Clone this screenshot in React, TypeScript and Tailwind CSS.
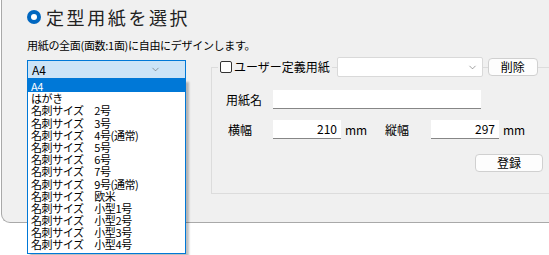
import { ChevronDown } from "lucide-react";

const items = [
  "A4",
  "はがき",
  "名刺サイズ　2号",
  "名刺サイズ　3号",
  "名刺サイズ　4号(通常)",
  "名刺サイズ　5号",
  "名刺サイズ　6号",
  "名刺サイズ　7号",
  "名刺サイズ　9号(通常)",
  "名刺サイズ　欧米",
  "名刺サイズ　小型1号",
  "名刺サイズ　小型2号",
  "名刺サイズ　小型3号",
  "名刺サイズ　小型4号",
];

export default function App() {
  return (
    <div className="w-[549px] h-[255px] bg-white overflow-hidden text-black font-['Noto_Sans_CJK_JP',sans-serif]">
      <div className="ml-[1px] h-[223px] bg-[#f0f0f0] border-l border-b border-[#a9a9a9] rounded-bl-[9px] pl-[25px] pt-[4px]">
        {/* title */}
        <div className="flex items-center h-[26px]">
          <div className="w-[14px] h-[14px] rounded-full bg-[#0067c0] flex items-center justify-center">
            <div className="w-[6px] h-[6px] rounded-full bg-white" />
          </div>
          <span className="ml-[5px] text-[18px] leading-[26px] tracking-[2.6px] text-[#222]">定型用紙を選択</span>
        </div>

        <p className="mt-[8px] text-[11px] leading-[14px] tracking-[-0.3px]">用紙の全面(面数:1面)に自由にデザインします。</p>

        <div className="flex items-start mt-[8px]">
          {/* combobox with open list */}
          <div className="relative w-[159px] shrink-0">
            <div className="h-[19px] bg-[#cce4f7] border border-[#0078d7] flex items-center justify-between pl-[4px] pr-[24px] text-[12px]">
              <span className="leading-none">A4</span>
              <ChevronDown className="w-[11px] h-[11px] text-[#555]" strokeWidth={1.2} />
            </div>
            <ul className="absolute left-0 top-full z-10 w-[159px] pb-[2px] bg-white border border-[#0078d7] shadow-[3px_3px_2px_rgba(0,0,0,0.25)] text-[11px] tracking-[-0.4px]">
              {items.map((it, i) => (
                <li
                  key={it}
                  className={
                    i === 0
                      ? "h-[12.2px] leading-[12.2px] pl-[3px] bg-[#0078d7] text-white whitespace-nowrap"
                      : "h-[12.2px] leading-[12.2px] pl-[3px] whitespace-nowrap"
                  }
                >
                  {it}
                </li>
              ))}
            </ul>
          </div>

          {/* user defined group box */}
          <div className="ml-[25px] mt-[7px] w-[360px] h-[127px] border border-[#dcdcdc] shrink-0">
            <div className="flex items-center -mt-[11px] h-[20px] text-[12px]">
              <div className="ml-[6px] flex items-center bg-[#f0f0f0] pl-[2px] pr-[2px]">
                <div className="w-[12px] h-[12px] border border-[#333] rounded-[2px] bg-white" />
                <span className="ml-[2px] leading-none">ユーザー定義用紙</span>
              </div>
              <div className="ml-[5px] w-[146px] h-[20px] bg-white border border-[#d9d9d9] rounded-[2px] flex items-center justify-end pr-[4px]">
                <ChevronDown className="w-[11px] h-[11px] text-[#555]" strokeWidth={1.2} />
              </div>
              <button className="ml-[5px] w-[50px] h-[18px] bg-[#fdfdfd] border border-[#d0d0d0] rounded-[4px] text-[12px] leading-none">削除</button>
            </div>

            <div className="flex items-center mt-[13px] pl-[14px] text-[12px]">
              <span className="w-[47px]">用紙名</span>
              <div className="w-[208px] h-[19px] bg-white border-b border-[#868686]" />
            </div>

            <div className="flex items-center mt-[11px] pl-[16px] text-[12px]">
              <span className="w-[45px]">横幅</span>
              <div className="w-[68px] h-[19px] bg-white border-b border-[#868686] text-right pr-[4px] leading-[18px]">210</div>
              <span className="ml-[4px] w-[40px]">mm</span>
              <span className="w-[46px]">縦幅</span>
              <div className="w-[68px] h-[19px] bg-white border-b border-[#868686] text-right pr-[4px] leading-[18px]">297</div>
              <span className="ml-[4px]">mm</span>
            </div>

            <div className="flex mt-[15px] pl-[263px]">
              <button className="w-[68px] h-[18px] bg-[#fdfdfd] border border-[#d0d0d0] rounded-[4px] text-[12px] leading-none">登録</button>
            </div>
          </div>
        </div>
      </div>
    </div>
  );
}
